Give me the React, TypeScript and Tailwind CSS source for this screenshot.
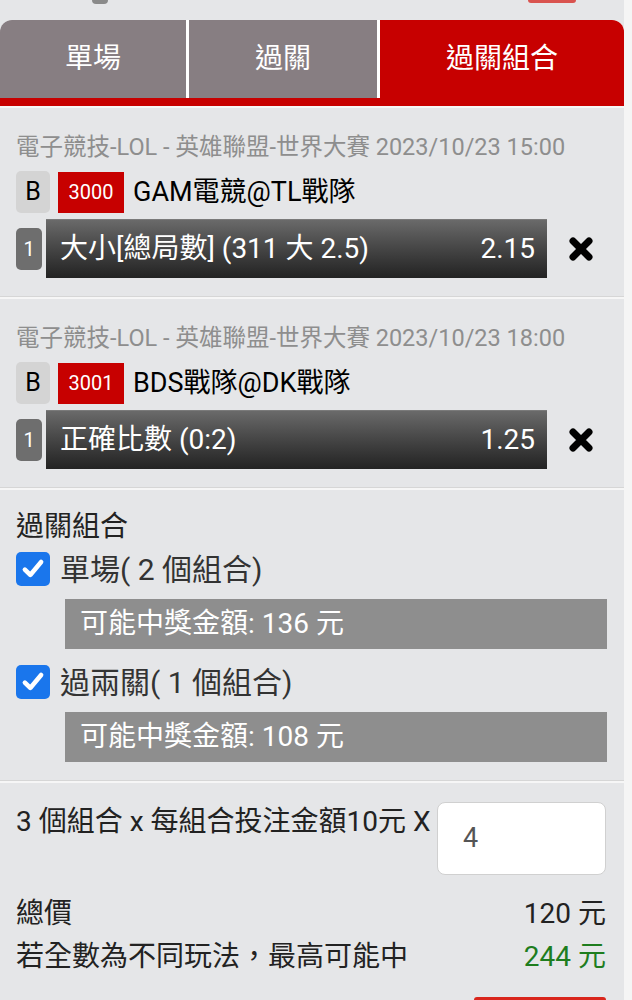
import React from "react";

const bets = [
  {
    league: "電子競技-LOL - 英雄聯盟-世界大賽 2023/10/23 15:00",
    code: "3000",
    teams: "GAM電競@TL戰隊",
    pick: "大小[總局數] (311 大 2.5)",
    odds: "2.15",
  },
  {
    league: "電子競技-LOL - 英雄聯盟-世界大賽 2023/10/23 18:00",
    code: "3001",
    teams: "BDS戰隊@DK戰隊",
    pick: "正確比數 (0:2)",
    odds: "1.25",
  },
];

const combos = [
  { label: "單場( 2 個組合)", prize: "可能中獎金額: 136 元" },
  { label: "過兩關( 1 個組合)", prize: "可能中獎金額: 108 元" },
];

function CloseIcon() {
  return (
    <svg width="28" height="28" viewBox="0 0 28 28">
      <path d="M6 6 L22 22 M22 6 L6 22" stroke="#000" strokeWidth="7" strokeLinecap="round" />
    </svg>
  );
}

function CheckBox() {
  return (
    <div className="w-[34px] h-[34px] rounded-[5px] bg-[#1a76ec] flex items-center justify-center shrink-0">
      <svg width="26" height="26" viewBox="0 0 24 24">
        <path d="M4.5 12.5 L9.5 17.5 L19.5 5.5" stroke="#fff" strokeWidth="4.2" fill="none" strokeLinecap="round" strokeLinejoin="round" />
      </svg>
    </div>
  );
}

export default function App() {
  return (
    <div className="flex w-[632px] h-screen overflow-hidden bg-[#f5f5f5] font-['Roboto','Noto_Sans_CJK_TC',sans-serif]">
      <div className="w-[624px] shrink-0 bg-[#e5e6e8]">
        {/* clipped header above */}
        <div className="h-[20px] flex justify-between items-start">
          <div className="ml-[92px] w-[16px] h-[4px] rounded-b-full bg-[#8a8a8a]" />
          <div className="mr-[48px] w-[48px] h-[3px] rounded-b-md bg-[#d9534f]" />
        </div>

        {/* tabs */}
        <div className="flex gap-[3px] bg-white rounded-t-[12px] overflow-hidden border-b-8 border-[#c70000]">
          <div className="w-[186px] h-[78px] bg-[#877e82] text-white text-[28px] flex items-center justify-center">單場</div>
          <div className="w-[188px] h-[78px] bg-[#877e82] text-white text-[28px] flex items-center justify-center">過關</div>
          <div className="flex-1 h-[78px] bg-[#c70000] text-white text-[28px] flex items-center justify-center">過關組合</div>
        </div>
        <div className="h-[2px] bg-[#f6f6f6]" />

        {bets.map((b) => (
          <div key={b.code} className="pt-[23px] pb-[19px] pl-[16px] border-b-2 border-[#f6f6f6] shadow-[0_-1px_0_#d6d6d6_inset]">
            <div className="text-[23.5px] leading-[32px] text-[#8e8e8e] whitespace-nowrap">{b.league}</div>
            <div className="flex items-center mt-[8px] h-[42px]">
              <div className="w-[34px] h-[42px] rounded-[5px] bg-[#d4d4d4] text-black text-[25px] flex items-center justify-center">B</div>
              <div className="ml-[8px] w-[66px] h-[41px] bg-[#c70000] text-white text-[20px] flex items-center justify-center">{b.code}</div>
              <div className="ml-[9px] text-[27px] text-black">{b.teams}</div>
            </div>
            <div className="flex items-center mt-[6px]">
              <div className="w-[26px] h-[42px] rounded-[5px] bg-[#6e6e6e] text-white text-[20px] flex items-center justify-center">1</div>
              <div className="ml-[4px] w-[501px] h-[59px] bg-linear-to-b from-[#6a6a6a] to-[#232323] border-t border-[#7a7a7a] flex items-center justify-between pl-[14px] pr-[12px] text-white text-[28px]">
                <span>{b.pick}</span>
                <span>{b.odds}</span>
              </div>
              <div className="ml-[20px]">
                <CloseIcon />
              </div>
            </div>
          </div>
        ))}

        <div className="pt-[18px] pb-[19px] border-b-2 border-[#f6f6f6] shadow-[0_-1px_0_#d6d6d6_inset]">
          <div className="pl-[16px] text-[28px] leading-[38px] text-[#222]">過關組合</div>
          {combos.map((c, i) => (
            <div key={c.label} className={i === 0 ? "mt-[3px]" : "mt-[13px]"}>
              <div className="flex items-center h-[40px] pl-[16px]">
                <CheckBox />
                <span className="ml-[10px] text-[30px] text-[#333]">{c.label}</span>
              </div>
              <div className="ml-[65px] mr-[17px] mt-[10px] h-[50px] bg-[#8e8e8e] text-white text-[28px] flex items-center pl-[15px]">{c.prize}</div>
            </div>
          ))}
        </div>

        <div className="pt-[19px] pl-[16px] pr-[18px]">
          <div className="flex items-start justify-between">
            <span className="text-[28px] leading-[40px] text-[#222] whitespace-nowrap">3 個組合 x 每組合投注金額10元 X</span>
            <div className="w-[169px] h-[73px] shrink-0 bg-white rounded-[8px] border border-[#d0d0d0] flex items-center pl-[25px] text-[27px] text-[#555]">4</div>
          </div>
          <div className="mt-[17px] flex justify-between text-[28px] leading-[43px] text-[#222]">
            <span>總價</span>
            <span>120 元</span>
          </div>
          <div className="flex justify-between text-[28px] leading-[43px] text-[#222]">
            <span>若全數為不同玩法，最高可能中</span>
            <span className="text-[#1e7d1e]">244 元</span>
          </div>
          <div className="flex justify-end mt-[19px]">
            <div className="w-[132px] h-[50px] bg-[#d9261c] rounded-t-[3px]" />
          </div>
        </div>
      </div>
    </div>
  );
}
